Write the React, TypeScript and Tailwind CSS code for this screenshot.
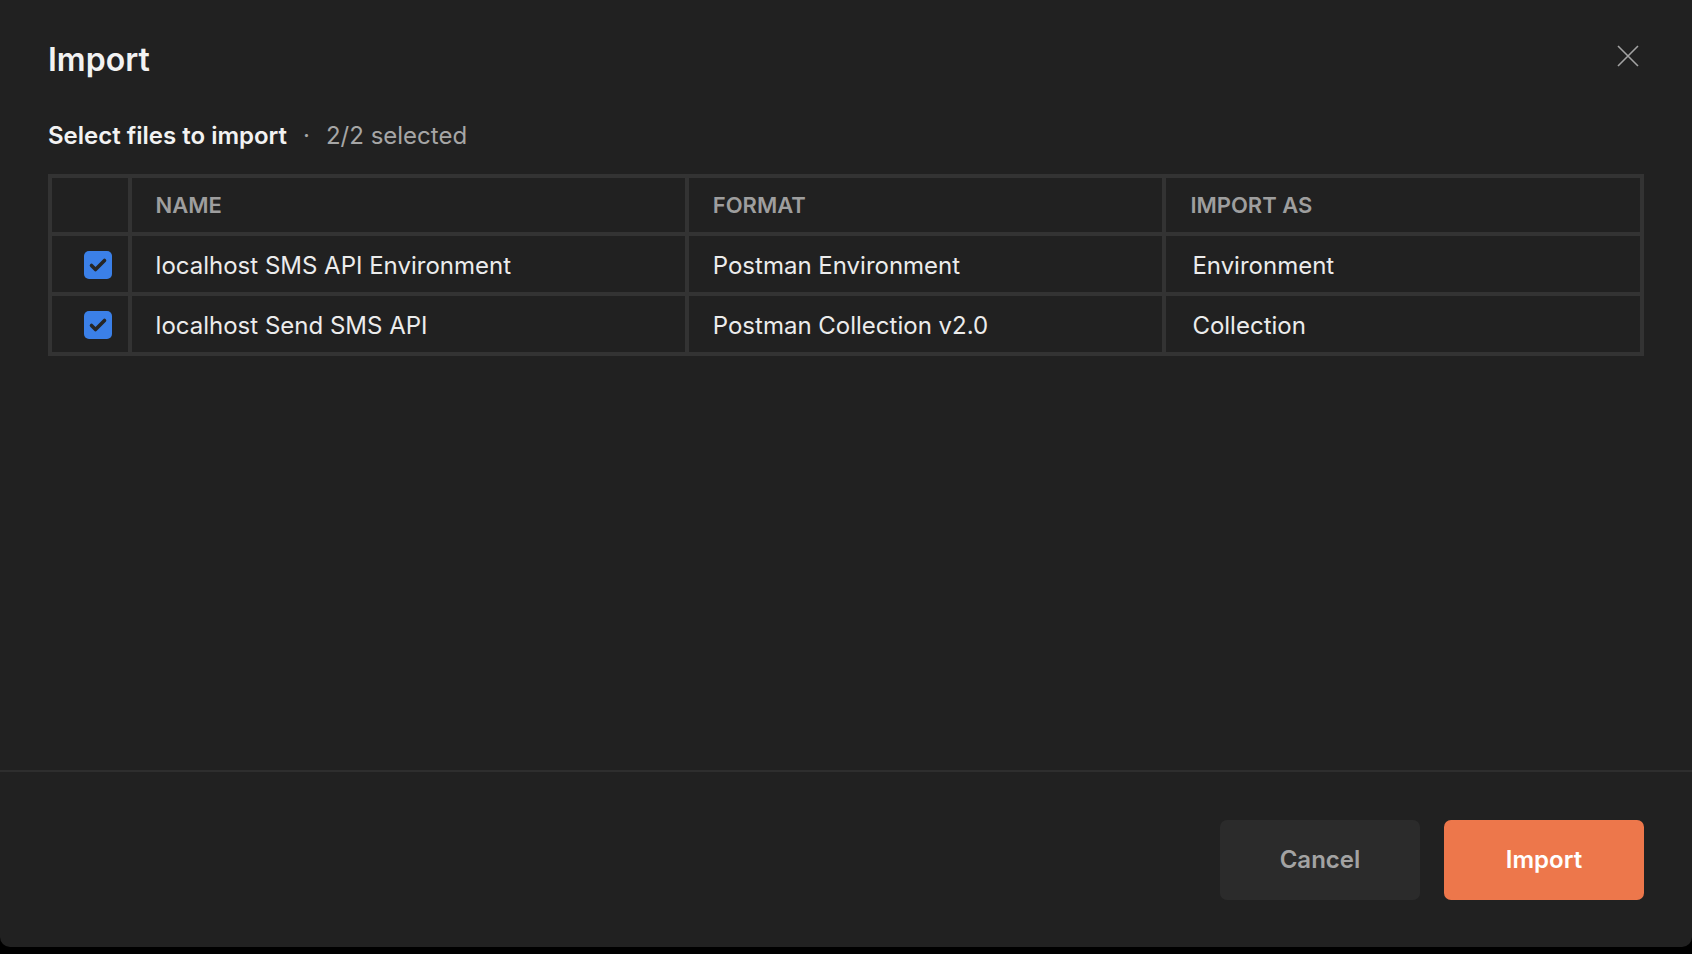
import React from "react";

const rows = [
  { name: "localhost SMS API Environment", format: "Postman Environment", as: "Environment" },
  { name: "localhost Send SMS API", format: "Postman Collection v2.0", as: "Collection" },
];

function Check() {
  return (
    <div className="w-[28px] h-[28px] rounded-[5px] bg-[#3b80e8] flex items-center justify-center">
      <svg width="28" height="28" viewBox="0 0 28 28" fill="none">
        <path d="M7.5 14.5 L11.5 18.5 L20.5 9.5" stroke="#262626" strokeWidth="3.6" strokeLinecap="round" strokeLinejoin="round" />
      </svg>
    </div>
  );
}

export default function App() {
  return (
    <div className="w-full h-[954px] bg-black" style={{ fontFamily: "Inter, 'Noto Sans', sans-serif" }}>
      <div className="h-[947px] bg-[#212121] rounded-b-[10px] flex flex-col">
        <div className="px-[48px] pt-[42px] flex items-start justify-between">
          <h1 className="text-[32px] leading-[36px] font-semibold text-[#f2f2f2]">Import</h1>
          <button className="mt-[3px] mr-[5px] w-[22px] h-[22px] flex items-center justify-center">
            <svg width="22" height="22" viewBox="0 0 22 22" fill="none">
              <path d="M1 1 L21 21 M21 1 L1 21" stroke="#a3a3a3" strokeWidth="1.6" />
            </svg>
          </button>
        </div>
        <div className="px-[48px] mt-[42px] flex items-center text-[24px] leading-[32px]">
          <span className="font-semibold text-[#f2f2f2]">Select files to import</span>
          <span className="mx-[16px] text-[#a6a6a6]">·</span>
          <span className="text-[#a6a6a6]">2/2 selected</span>
        </div>
        <div className="px-[48px] mt-[22px]">
          <table className="w-full table-fixed border-separate border-spacing-0 border-2 border-[#333333]">
            <colgroup>
              <col className="w-[5%]" />
              <col className="w-[35%]" />
              <col className="w-[30%]" />
              <col className="w-[30%]" />
            </colgroup>
            <thead>
              <tr className="h-[58px]">
                <th className="border-2 border-[#333333]"></th>
                <th className="border-2 border-[#333333] pl-[24px] text-left text-[22px] font-semibold text-[#9e9e9e]">NAME</th>
                <th className="border-2 border-[#333333] pl-[24px] text-left text-[22px] font-semibold text-[#9e9e9e]">FORMAT</th>
                <th className="border-2 border-[#333333] pl-[24px] text-left text-[22px] font-semibold text-[#9e9e9e]">IMPORT AS</th>
              </tr>
            </thead>
            <tbody>
              {rows.map((r) => (
                <tr key={r.name} className="h-[60px]">
                  <td className="border-2 border-[#333333] pl-[32px] pt-[2px]">
                    <Check />
                  </td>
                  <td className="border-2 border-[#333333] pl-[24px] pt-[3px] text-[24px] text-[#ececec]">{r.name}</td>
                  <td className="border-2 border-[#333333] pl-[24px] pt-[3px] text-[24px] text-[#ececec]">{r.format}</td>
                  <td className="border-2 border-[#333333] pl-[26px] pt-[3px] text-[24px] text-[#ececec]">{r.as}</td>
                </tr>
              ))}
            </tbody>
          </table>
        </div>
        <div className="flex-1" />
        <div className="border-t-2 border-[#2e2e2e] h-[177px] px-[48px] flex items-center justify-end gap-[24px]">
          <button className="w-[200px] h-[80px] rounded-[7px] bg-[#2b2b2b] text-[24px] font-semibold text-[#a3a3a3]">Cancel</button>
          <button className="w-[200px] h-[80px] rounded-[7px] bg-[#ed774b] text-[24px] font-semibold text-white">Import</button>
        </div>
      </div>
    </div>
  );
}
